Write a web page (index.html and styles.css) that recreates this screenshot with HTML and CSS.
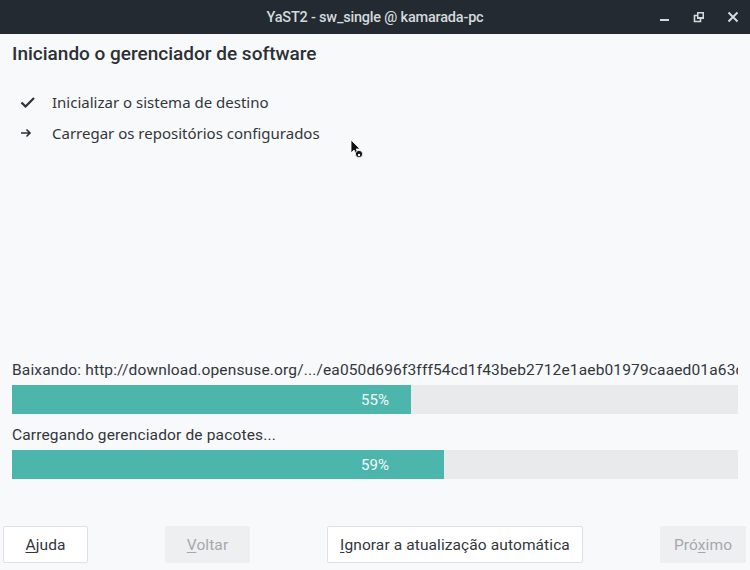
FILE: index.html
```html
<!DOCTYPE html>
<html>
<head>
<meta charset="utf-8">
<link rel="stylesheet" href="styles.css">
</head>
<body>
<div class="window">
  <header class="titlebar">
    <span class="title">YaST2 - sw_single @ kamarada-pc</span>
    <div class="controls">
      <svg class="ctl" width="12" height="12" viewBox="0 0 12 12"><rect x="1" y="8" width="9" height="2" fill="#d5d9dc"/></svg>
      <svg class="ctl" width="12" height="12" viewBox="0 0 12 12"><path d="M1.5 4.5h6v6h-6z" fill="none" stroke="#d5d9dc" stroke-width="1.6"/><rect x="4" y="1" width="7" height="7" fill="#d5d9dc"/><rect x="5.5" y="2.5" width="4" height="3.5" fill="#232a31"/></svg>
      <svg class="ctl" width="12" height="12" viewBox="0 0 12 12"><path d="M1.5 1.5l9 9M10.5 1.5l-9 9" stroke="#d5d9dc" stroke-width="2"/></svg>
    </div>
  </header>
  <main class="content">
    <h1 class="heading">Iniciando o gerenciador de software</h1>
    <ul class="steps">
      <li class="step">
        <span class="mark"><svg width="16" height="12" viewBox="0 0 16 12"><path d="M1.5 6.5l4 4L14 2" fill="none" stroke="#2b2f33" stroke-width="2.2"/></svg></span>
        <span>Inicializar o sistema de destino</span>
      </li>
      <li class="step">
        <span class="mark"><svg width="12" height="10" viewBox="0 0 12 10"><path d="M1 5h9M6.5 1.5L10 5l-3.5 3.5" fill="none" stroke="#2b2f33" stroke-width="1.6"/></svg></span>
        <span>Carregar os repositórios configurados</span>
      </li>
    </ul>
    <div class="spacer"></div>
    <div class="progress-group">
      <div class="plabel">Baixando: http://download.opensuse.org/.../ea050d696f3fff54cd1f43beb2712e1aeb01979caaed01a63dfe2b3d4c.rpm</div>
      <div class="bar"><div class="fill" style="width:55%"></div><span class="pct">55%</span></div>
    </div>
    <div class="progress-group">
      <div class="plabel">Carregando gerenciador de pacotes...</div>
      <div class="bar"><div class="fill" style="width:59.5%"></div><span class="pct">59%</span></div>
    </div>
  </main>
  <footer class="buttons">
    <button class="btn w-ajuda"><u>A</u>juda</button>
    <button class="btn disabled w-voltar"><u>V</u>oltar</button>
    <button class="btn w-ignorar"><u>I</u>gnorar a atualização automática</button>
    <button class="btn disabled w-proximo">Pró<u>x</u>imo</button>
  </footer>
  <svg class="cursor" width="14" height="22" viewBox="0 0 14 22"><path d="M1 1v13l3-3 2.5 5 2-1-2.3-5H10z" fill="#111" stroke="#fff" stroke-width="0.8"/><circle cx="9" cy="15" r="3.6" fill="#111" stroke="#fff" stroke-width="0.8"/><circle cx="9" cy="16" r="1.2" fill="#fff"/></svg>
</div>
</body>
</html>
```
FILE: styles.css
```css
* { box-sizing: border-box; }
html, body { margin: 0; padding: 0; }
body { width: 750px; height: 570px; overflow: hidden; background: #f8f9fb; font-family: "Noto Sans", sans-serif; color: #31363b; }
.window { position: relative; width: 750px; height: 570px; display: flex; flex-direction: column; }
.titlebar { height: 34px; background: #232a31; display: flex; align-items: center; justify-content: center; position: relative; flex: none; }
.title { font-family: "Roboto", sans-serif; font-weight: 500; font-size: 14.5px; color: #d5d9dc; letter-spacing: -0.2px; }
.controls { position: absolute; right: 11px; top: 11px; display: flex; gap: 22px; }
.ctl { display: block; }
.content { flex: 1; display: flex; flex-direction: column; padding: 0 12px; }
.heading { margin: 9px 0 0; font-family: "Roboto", sans-serif; font-weight: 500; font-size: 19px; line-height: 22px; color: #2b3035; }
.steps { list-style: none; margin: 21px 0 0; padding: 0; }
.step { display: flex; align-items: center; height: 31px; font-size: 15px; color: #31363b; }
.mark { width: 40px; display: flex; align-items: center; padding-left: 8px; }
.spacer { flex: 1; }
.progress-group + .progress-group { margin-top: 11px; }
.plabel { font-family: "Roboto", sans-serif; font-size: 15.5px; line-height: 20px; white-space: nowrap; overflow: hidden; color: #31363b; margin-bottom: 5px; letter-spacing: 0.15px; }
.bar { height: 29px; background: #e9eaec; display: grid; }
.bar > * { grid-area: 1 / 1; }
.fill { height: 100%; background: #4db6ac; }
.pct { align-self: center; justify-self: center; font-family: "Roboto", sans-serif; font-size: 15px; color: #f2fbfa; }
.buttons { height: 91px; flex: none; display: flex; align-items: flex-end; justify-content: space-between; padding: 0 4px 7px 3px; }
.btn { height: 37px; border: 1px solid #dfe1e4; background: #ffffff; font-family: "Roboto", sans-serif; font-size: 15.5px; letter-spacing: 0.1px; color: #31363b; padding: 0 6px; border-radius: 2px; }
.btn u { text-decoration-thickness: 1px; text-underline-offset: 2px; }
.btn.disabled { background: #eeeff1; border-color: #eeeff1; color: #a5a8ab; }
.w-ajuda { width: 85px; }
.w-voltar { width: 85px; }
.w-ignorar { width: 256px; }
.w-proximo { width: 86px; }
.cursor { position: absolute; left: 350px; top: 139px; }
```
